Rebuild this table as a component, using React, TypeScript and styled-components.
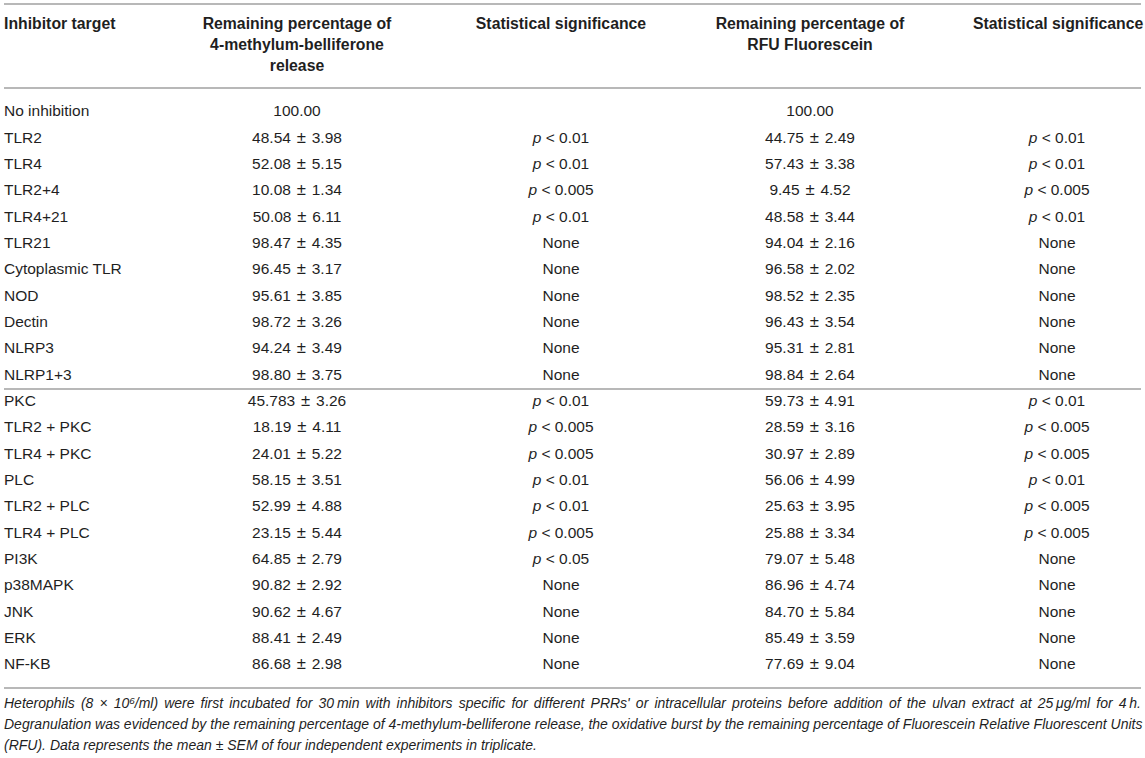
import React from "react";
import styled, { createGlobalStyle } from "styled-components";

const Global = createGlobalStyle`
  html, body { margin: 0; padding: 0; background: #ffffff; }
  body { font-family: "Liberation Sans", Arial, Helvetica, sans-serif; color: #1f1f1f; }
`;

const Page = styled.div`
  width: 1145px;
  padding: 3px 4px 0 4px;
  box-sizing: border-box;
`;

const Table = styled.div`
  border-top: 2px solid #b8b8b8;
  font-size: 15.5px;
`;

const cols = "115px 356px 172px 326px 168px";

const HeaderRow = styled.div`
  display: grid;
  grid-template-columns: ${cols};
  padding: 8px 0 11px 0;
  border-bottom: 2px solid #b8b8b8;
  line-height: 21px;
  font-weight: 700;
  font-size: 15.8px;
`;

const HeadCell = styled.div<{ $align?: "left" | "center" }>`
  text-align: ${(p) => p.$align ?? "center"};
  white-space: nowrap;
`;

const Group = styled.div<{ $divider?: boolean }>`
  padding: ${(p) => (p.$divider ? "0 0 9px 0" : "9px 0 0 0")};
  box-shadow: ${(p) => (p.$divider ? "inset 0 2px 0 #b8b8b8" : "none")};
`;

const Row = styled.div`
  display: grid;
  grid-template-columns: ${cols};
  height: 26.35px;
  align-items: center;
  line-height: 20px;
`;

const Cell = styled.div<{ $align?: "left" | "center" }>`
  text-align: ${(p) => p.$align ?? "center"};
  white-space: nowrap;
`;

const P = styled.i`
  font-style: italic;
`;

const PM = styled.span`
  margin: 0 1.5px;
  font-size: 1.08em;
  line-height: 1;
`;

const Footnote = styled.div`
  border-top: 2px solid #b8b8b8;
  padding-top: 4px;
  font-size: 14px;
  font-style: italic;
  line-height: 21px;
`;

const FootLine = styled.div<{ $justify?: boolean }>`
  text-align: ${(p) => (p.$justify ? "justify" : "left")};
  text-align-last: ${(p) => (p.$justify ? "justify" : "left")};
  white-space: nowrap;
`;

const Sup = styled.sup`
  font-size: 0.7em;
  line-height: 0;
  vertical-align: 0.45em;
`;

type R = [string, string, string, string, string];

const group1: R[] = [
  ["No inhibition", "100.00", "", "100.00", ""],
  ["TLR2", "48.54 ± 3.98", "p < 0.01", "44.75 ± 2.49", "p < 0.01"],
  ["TLR4", "52.08 ± 5.15", "p < 0.01", "57.43 ± 3.38", "p < 0.01"],
  ["TLR2+4", "10.08 ± 1.34", "p < 0.005", "9.45 ± 4.52", "p < 0.005"],
  ["TLR4+21", "50.08 ± 6.11", "p < 0.01", "48.58 ± 3.44", "p < 0.01"],
  ["TLR21", "98.47 ± 4.35", "None", "94.04 ± 2.16", "None"],
  ["Cytoplasmic TLR", "96.45 ± 3.17", "None", "96.58 ± 2.02", "None"],
  ["NOD", "95.61 ± 3.85", "None", "98.52 ± 2.35", "None"],
  ["Dectin", "98.72 ± 3.26", "None", "96.43 ± 3.54", "None"],
  ["NLRP3", "94.24 ± 3.49", "None", "95.31 ± 2.81", "None"],
  ["NLRP1+3", "98.80 ± 3.75", "None", "98.84 ± 2.64", "None"],
];

const group2: R[] = [
  ["PKC", "45.783 ± 3.26", "p < 0.01", "59.73 ± 4.91", "p < 0.01"],
  ["TLR2 + PKC", "18.19 ± 4.11", "p < 0.005", "28.59 ± 3.16", "p < 0.005"],
  ["TLR4 + PKC", "24.01 ± 5.22", "p < 0.005", "30.97 ± 2.89", "p < 0.005"],
  ["PLC", "58.15 ± 3.51", "p < 0.01", "56.06 ± 4.99", "p < 0.01"],
  ["TLR2 + PLC", "52.99 ± 4.88", "p < 0.01", "25.63 ± 3.95", "p < 0.005"],
  ["TLR4 + PLC", "23.15 ± 5.44", "p < 0.005", "25.88 ± 3.34", "p < 0.005"],
  ["PI3K", "64.85 ± 2.79", "p < 0.05", "79.07 ± 5.48", "None"],
  ["p38MAPK", "90.82 ± 2.92", "None", "86.96 ± 4.74", "None"],
  ["JNK", "90.62 ± 4.67", "None", "84.70 ± 5.84", "None"],
  ["ERK", "88.41 ± 2.49", "None", "85.49 ± 3.59", "None"],
  ["NF-KB", "86.68 ± 2.98", "None", "77.69 ± 9.04", "None"],
];

const Sig = ({ v }: { v: string }) =>
  v.startsWith("p ") ? (
    <>
      <P>p</P>
      {v.slice(1)}
    </>
  ) : (
    <>{v}</>
  );

const Val = ({ v }: { v: string }) => {
  const parts = v.split(" ± ");
  if (parts.length < 2) return <>{v}</>;
  return (
    <>
      {parts[0]} <PM>±</PM> {parts[1]}
    </>
  );
};

const DataRow = ({ r }: { r: R }) => (
  <Row>
    <Cell $align="left">{r[0]}</Cell>
    <Cell>
      <Val v={r[1]} />
    </Cell>
    <Cell>
      <Sig v={r[2]} />
    </Cell>
    <Cell>
      <Val v={r[3]} />
    </Cell>
    <Cell>
      <Sig v={r[4]} />
    </Cell>
  </Row>
);

export default function App() {
  return (
    <>
      <Global />
      <Page>
        <Table>
          <HeaderRow>
            <HeadCell $align="left">Inhibitor target</HeadCell>
            <HeadCell>
              Remaining percentage of
              <br />
              4-methylum-belliferone
              <br />
              release
            </HeadCell>
            <HeadCell>Statistical significance</HeadCell>
            <HeadCell>
              Remaining percentage of
              <br />
              RFU Fluorescein
            </HeadCell>
            <HeadCell>Statistical significance</HeadCell>
          </HeaderRow>
          <Group>
            {group1.map((r) => (
              <DataRow key={r[0]} r={r} />
            ))}
          </Group>
          <Group $divider>
            {group2.map((r) => (
              <DataRow key={r[0]} r={r} />
            ))}
          </Group>
          <Footnote>
            <FootLine $justify>
              Heterophils (8 × 10<Sup>6</Sup>/ml) were first incubated for 30{"\u2009"}min with inhibitors specific for
              different PRRs' or intracellular proteins before addition of the ulvan extract at 25{"\u2009"}μg/ml for 4{"\u2009"}h.
            </FootLine>
            <FootLine $justify>
              Degranulation was evidenced by the remaining percentage of 4-methylum-belliferone release, the oxidative
              burst by the remaining percentage of Fluorescein Relative Fluorescent Units
            </FootLine>
            <FootLine>
              (RFU). Data represents the mean ± SEM of four independent experiments in triplicate.
            </FootLine>
          </Footnote>
        </Table>
      </Page>
    </>
  );
}
